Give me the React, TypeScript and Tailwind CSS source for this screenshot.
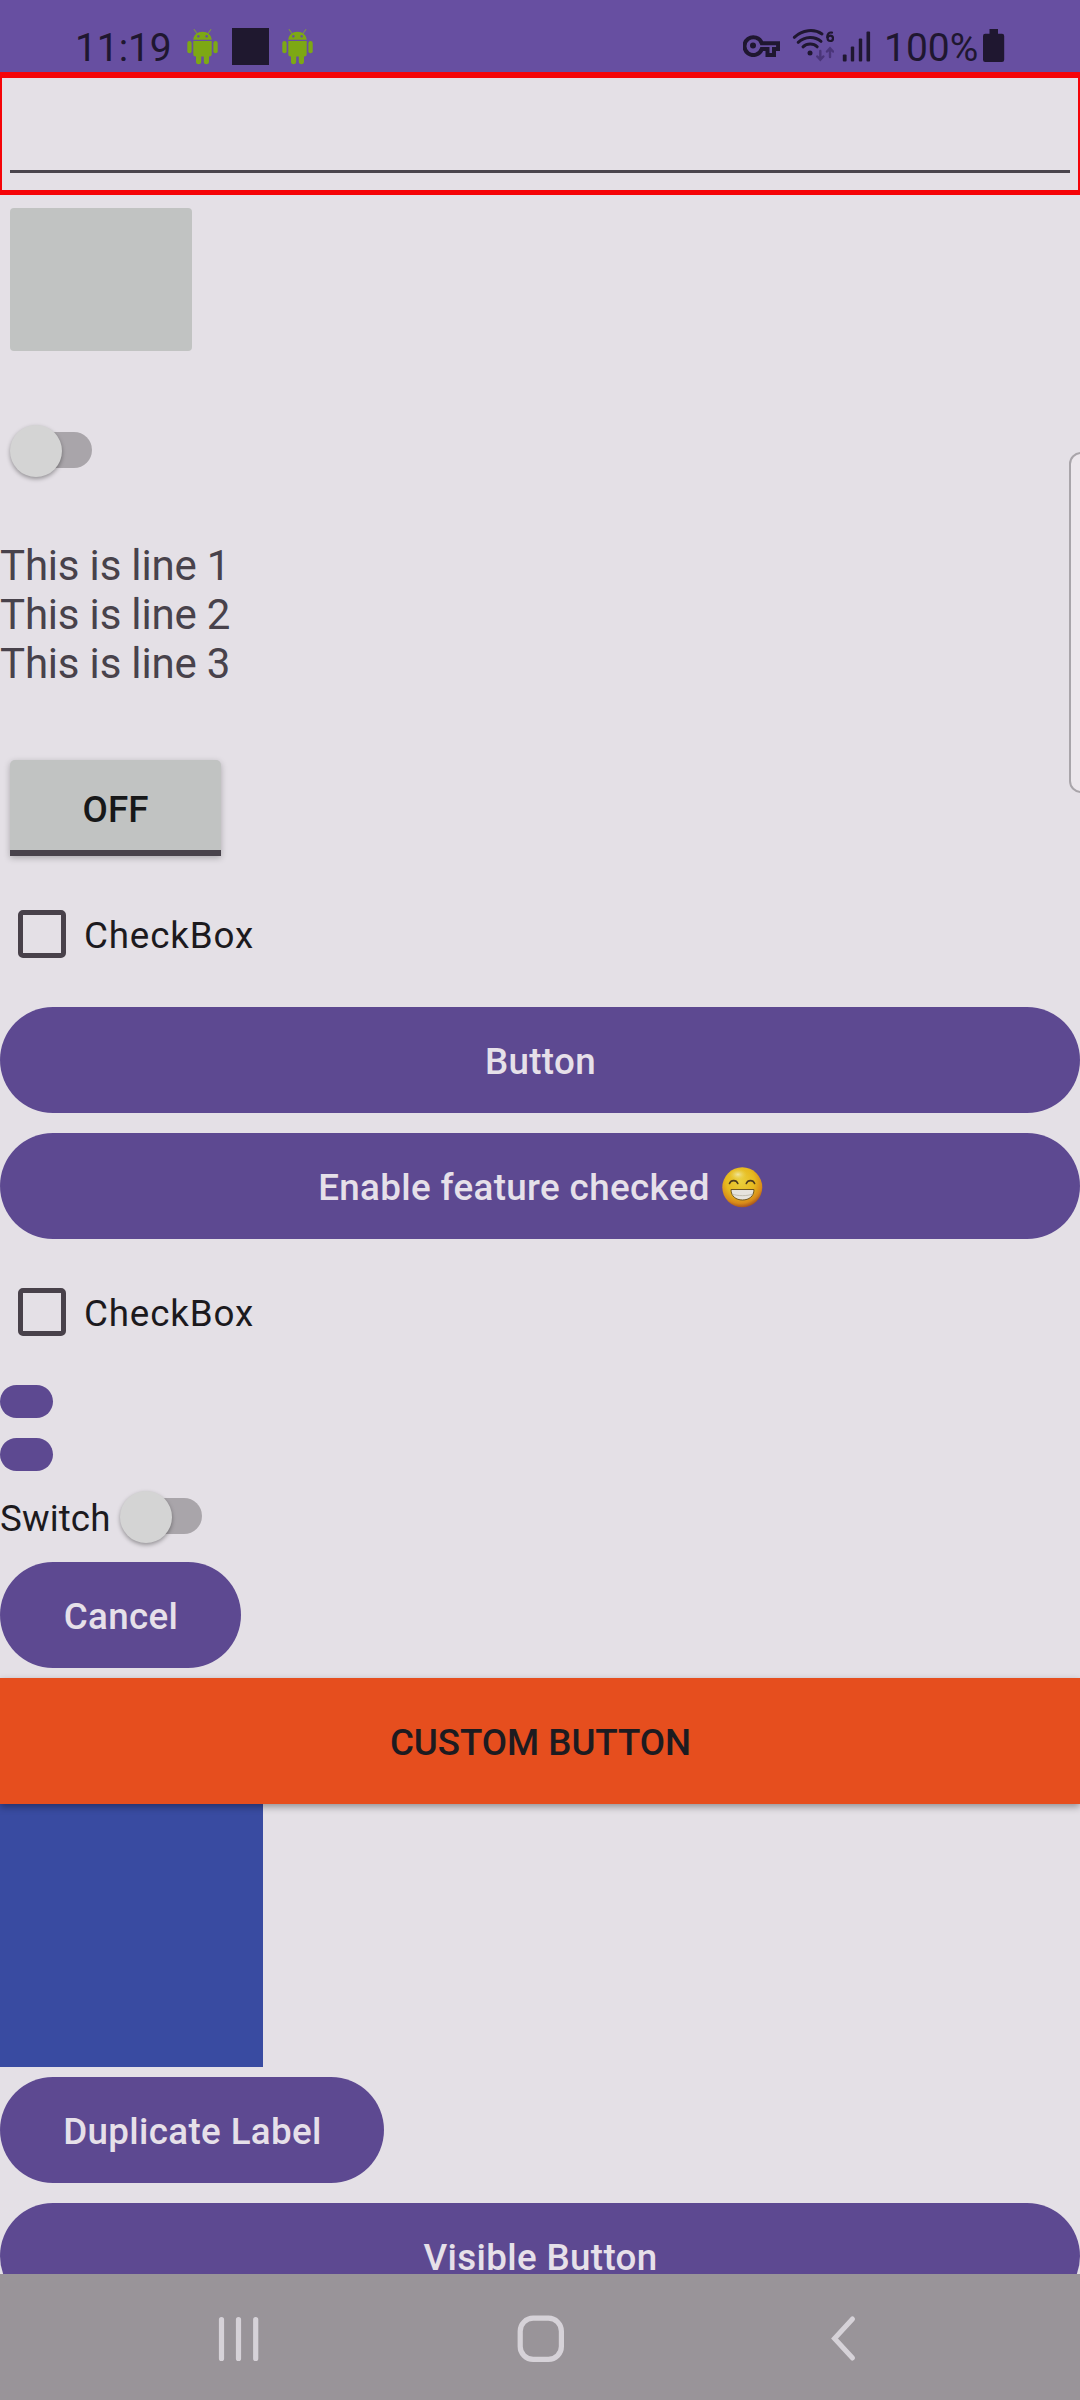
import React from "react";

function Robot() {
  return (
    <svg width="32" height="37" viewBox="0 0 32 37" fill="#7da814">
      <path d="M7.2 1.6l3.2 4.4M23.8 1.6l-3.2 4.4" stroke="#7c8a50" strokeWidth="1.2" strokeLinecap="round" fill="none" />
      <path fillRule="evenodd" d="M6.3 11.7C6.6 7 10.500 3.800 15.500 3.800s8.900 3.200 9.200 7.900zM11.300 7a1.300 1.300 0 1 0 .1 0zM19.600 7a1.300 1.300 0 1 0 .1 0z" />
      <path d="M6.300 13h18.400v13.200a2.300 2.300 0 0 1-2.300 2.300H22v5.100a2.600 2.600 0 0 1-5.200 0v-5.100h-2.600v5.100a2.600 2.600 0 0 1-5.200 0v-5.100h-.4a2.300 2.300 0 0 1-2.300-2.300z" />
      <rect x="0.300" y="13" width="4.300" height="12.300" rx="2.100" />
      <rect x="26.400" y="13" width="4.300" height="12.300" rx="2.100" />
    </svg>
  );
}

function StatusBar() {
  return (
    <header className="flex h-[72px] items-start bg-[#674fa1] pl-[75px] text-[39px] leading-[46px] text-[#1f1730]">
      <span className="mt-[25px] w-[112px] tracking-[-0.1px]">11:19</span>
      <div className="mt-[28px] flex w-[127px] justify-between">
        <Robot />
        <div className="-ml-[1px] h-[37px] w-[37px] bg-[#1f182f]" />
        <Robot />
      </div>
      <svg className="ml-[429px] mt-[35px]" width="37" height="22" viewBox="0 0 37 22">
        <path d="M18.800 8.300H35.100V14H31v6h-6.500v-6h-5.700A8.900 8.900 0 1 1 18.800 8.300z" fill="none" stroke="#1f1730" strokeWidth="4" strokeLinejoin="miter" />
        <circle cx="10" cy="10.500" r="3" fill="#1f1730" />
      </svg>
      <svg className="ml-[12px] mt-[28px]" width="42" height="36" viewBox="0 0 42 36" fill="none" stroke="#1f1730" strokeWidth="3" strokeLinecap="round">
        <path d="M2.300 9.300C10.500 1.800 22 0.500 30 6M6.200 14.300c7-6.300 16.500-6.300 22.800-1M11 18.800c4-3.800 10.500-3.800 14.200 0" />
        <circle cx="18" cy="25" r="2.500" fill="#1f1730" stroke="none" />
        <path d="M40 4.600C37 4 35.200 6 35.200 9.300" strokeWidth="2.200" />
        <circle cx="38.300" cy="10.300" r="2.700" strokeWidth="2.200" />
        <path d="M28.300 23v8M25.300 28.500l3 3.300 3-3.300M38 29v-8M35 23.500l3-3.300 3 3.300" stroke="#4a3579" strokeWidth="2.400" />
      </svg>
      <svg className="ml-[8px] mt-[31px]" width="29" height="31" viewBox="0 0 29 31" fill="#1f1730">
        <rect x="0.800" y="23.500" width="3.800" height="7" rx="1" />
        <rect x="8.800" y="15.500" width="3.400" height="15" rx="1" />
        <rect x="16.800" y="7.500" width="3.400" height="23" rx="1" />
        <rect x="24.500" y="0.500" width="3.600" height="30" rx="1" />
      </svg>
      <span className="ml-[13px] mt-[25px] w-[99px] whitespace-nowrap">100%</span>
      <svg className="mt-[29px]" width="22" height="33" viewBox="0 0 22 33" fill="#1f1730">
        <path d="M6.500 0h8.500v4.700h4a2.200 2.200 0 0 1 2.200 2.200v23.800a2.200 2.200 0 0 1-2.200 2.200H2.200A2.200 2.200 0 0 1 0 30.700V6.900a2.200 2.200 0 0 1 2.200-2.200h4.300z" />
      </svg>
    </header>
  );
}

function Toggle() {
  return (
    <span className="relative block h-[54px] w-[83px]">
      <span className="absolute left-[10px] top-[9px] h-[36px] w-[73px] rounded-full bg-[#a9a5aa]" />
      <span className="absolute left-[0.500px] top-[1.500px] h-[52px] w-[52px] rounded-full bg-[#d4d4d4] shadow-[0_2px_4px_rgba(0,0,0,0.35)]" />
    </span>
  );
}

function CheckRow() {
  return (
    <label className="flex h-[126px] items-center pl-[18px]">
      <span className="h-[48px] w-[48px] rounded-[5px] border-[5.500px] border-[#48414a]" />
      <span className="ml-[18px] pt-[2px] text-[36.750px] leading-[43px] tracking-[0.850px] text-[#1c1a1e]">CheckBox</span>
    </label>
  );
}

function Pill({ className, children }: { className: string; children?: React.ReactNode }) {
  return (
    <button className={"flex shrink-0 items-center justify-center whitespace-nowrap rounded-full bg-[#5d4991] pl-[1px] pt-[3px] text-[36.750px] font-medium leading-[32px] tracking-[0.360px] text-[#e6e0e9] " + className}>
      {children}
    </button>
  );
}

function GrinEmoji() {
  return (
    <svg className="ml-[12px]" width="41" height="41" viewBox="0 0 41 41">
      <defs>
        <radialGradient id="face" cx="0.450" cy="0.350" r="0.650">
          <stop offset="0" stopColor="#ead03f" />
          <stop offset="0.550" stopColor="#e7b91e" />
          <stop offset="0.850" stopColor="#d88a18" />
          <stop offset="1" stopColor="#a9561e" />
        </radialGradient>
        <radialGradient id="shine">
          <stop offset="0" stopColor="#efe5a2" />
          <stop offset="1" stopColor="#ead03f" stopOpacity="0" />
        </radialGradient>
      </defs>
      <circle cx="20.300" cy="20.300" r="20" fill="url(#face)" />
      <ellipse cx="16" cy="7.500" rx="9" ry="6" fill="url(#shine)" />
      <path d="M7.500 16.500c1.500-3.800 6.800-3.800 8.300 0M24.300 16.500c1.500-3.800 6.800-3.800 8.300 0" fill="none" stroke="#4e3b1e" strokeWidth="1.600" strokeLinecap="round" />
      <path d="M9 22.500h23c0 6.800-5 10.500-11.500 10.500S9 29.300 9 22.500z" fill="#e6e3dd" stroke="#6f5724" strokeWidth="1" />
      <path d="M10 27c6 2.200 15 2.200 21 0" fill="none" stroke="#b9b5a6" strokeWidth="0.800" />
    </svg>
  );
}

function NavBar() {
  return (
    <nav className="flex h-[126px] shrink-0 items-center bg-[#999499] pl-[216px]">
      <svg width="46" height="50" viewBox="0 0 46 50" fill="none" stroke="#d6d2d8" strokeWidth="5.200" strokeLinecap="round">
        <path d="M5.500 7.500v39M22.500 7.500v39M39.700 7.500v39" />
      </svg>
      <svg className="ml-[253px]" width="50" height="50" viewBox="0 0 50 50" fill="none" stroke="#d6d2d8" strokeWidth="5.200">
        <rect x="5.200" y="6.200" width="41.200" height="41.200" rx="13" />
      </svg>
      <svg className="ml-[262px]" width="34" height="50" viewBox="0 0 34 50" fill="none" stroke="#d6d2d8" strokeWidth="5" strokeLinecap="round">
        <path d="M25.500 7L7.500 26.500l18 19.500" />
      </svg>
    </nav>
  );
}

export default function App() {
  return (
    <div className="relative flex h-[2400px] w-[1080px] flex-col overflow-hidden bg-[#e4e0e6] font-['Roboto',sans-serif]">
      <StatusBar />
      <div className="mb-[1px] h-[123px] shrink-0 border-x-[2.500px] border-b-[5px] border-t-[6px] border-[#f50408] px-[8px] pt-[92px]">
        <div className="h-[3px] bg-[#4a454d]" />
      </div>
      <main className="flex min-h-0 flex-1 flex-col items-start overflow-hidden">
        <div className="ml-[10px] mt-[12px] h-[143px] w-[182px] shrink-0 rounded-[4px] bg-[#c1c3c2]" />
        <div className="ml-[9px] mt-[72px] shrink-0"><Toggle /></div>
        <p className="mt-[64px] shrink-0 whitespace-pre text-[42px] leading-[49px] tracking-[-0.180px] text-[#48424b]">
          {"This is line 1\nThis is line 2\nThis is line 3"}
        </p>
        <button className="ml-[10px] mt-[72px] flex h-[96px] w-[211px] shrink-0 items-center justify-center rounded-t-[5px] border-b-[6px] border-[#48424b] bg-[#c1c3c2] pt-[8px] text-[36.750px] font-medium leading-[43px] text-[#171819] shadow-[0_2px_6px_rgba(0,0,0,0.250)]">
          OFF
        </button>
        <div className="mt-[15px] shrink-0"><CheckRow /></div>
        <Pill className="mt-[10px] h-[106px] w-full">Button</Pill>
        <Pill className="mt-[20px] h-[106px] w-full">
          Enable feature checked
          <GrinEmoji />
        </Pill>
        <div className="mt-[10px] shrink-0"><CheckRow /></div>
        <Pill className="mt-[10px] h-[33px] w-[53px]" />
        <Pill className="mt-[20px] h-[33px] w-[53px]" />
        <div className="mt-[18px] flex h-[54px] shrink-0 items-center">
          <span className="w-[119px] pt-[5px] text-[36.750px] leading-[43px] tracking-[0.100px] text-[#1c1a1e]">Switch</span>
          <Toggle />
        </div>
        <Pill className="mt-[19px] h-[106px] w-[241px]">Cancel</Pill>
        <button className="relative mt-[10px] flex h-[126px] w-full shrink-0 items-center justify-center bg-[#e64e1e] pl-[1px] pt-[2px] text-[36.750px] font-medium leading-[43px] tracking-[-0.060px] text-[#1d1b20] shadow-[0_3px_7px_rgba(0,0,0,0.350)]">
          CUSTOM BUTTON
        </button>
        <div className="h-[263px] w-[263px] shrink-0 bg-[#394ba1]" />
        <Pill className="mt-[10px] h-[106px] w-[384px]">Duplicate Label</Pill>
        <Pill className="mt-[20px] h-[106px] w-full">Visible Button</Pill>
      </main>
      <NavBar />
      <div className="absolute right-[-14px] top-[452px] h-[341px] w-[25px] rounded-[12px] border-[2.500px] border-[#a9a5aa] bg-[#ece7ec]" />
    </div>
  );
}
